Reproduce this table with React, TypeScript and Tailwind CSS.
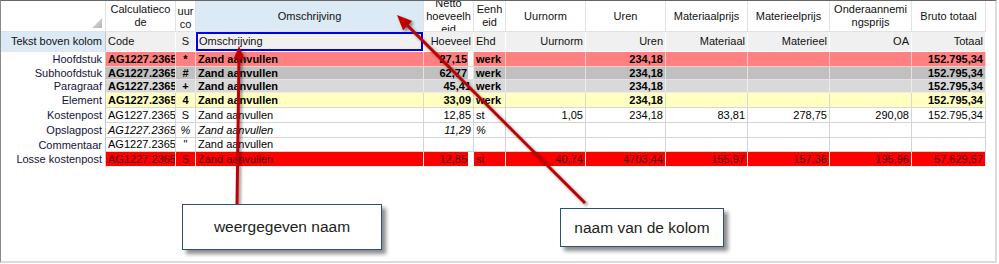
import clsx from "clsx";

type DataRow = {
  label: string;
  bg: string;
  line: string;
  font?: string;
  text?: string;
  gap?: boolean;
  cells: string[];
};

const COLS =
  "grid-cols-[105px_70px_20px_228px_50px_32px_80px_80px_82px_82px_82px_74px]";
const ROWS = "grid-rows-[31px_20px_15px_13px_13px_15px_15px_15px_14px_15px]";

// alignment per data column (code .. totaal)
const ALIGN = [
  "justify-start",
  "justify-center",
  "justify-start",
  "justify-end",
  "justify-start",
  "justify-end",
  "justify-end",
  "justify-end",
  "justify-end",
  "justify-end",
  "justify-end",
];

const headTop = [
  { lines: ["Calculatieco", "de"] },
  { lines: ["uur", "co"], cls: "pt-[3px]" },
  { lines: ["Omschrijving"], cls: "bg-[#dbeaf5]" },
  { lines: ["Netto", "hoeveelh", "eid"] },
  { lines: ["Eenh", "eid"] },
  { lines: ["Uurnorm"] },
  { lines: ["Uren"] },
  { lines: ["Materiaalprijs"] },
  { lines: ["Materieelprijs"] },
  { lines: ["Onderaannemi", "ngsprijs"] },
  { lines: ["Bruto totaal"] },
];

const headSub = [
  "Code",
  "S",
  "Omschrijving",
  "Hoeveel",
  "Ehd",
  "Uurnorm",
  "Uren",
  "Materiaal",
  "Materieel",
  "OA",
  "Totaal",
];

const code = "AG1227.2365";
const oms = "Zand aanvullen";

const rows: DataRow[] = [
  {
    label: "Hoofdstuk",
    bg: "bg-[#ff8080]",
    line: "border-[#f3d0d0]",
    font: "font-bold",
    gap: true,
    cells: [code, "*", oms, "27,15", "werk", "", "234,18", "", "", "", "152.795,34"],
  },
  {
    label: "Subhoofdstuk",
    bg: "bg-[#c0c0c0]",
    line: "border-[#e4e4e4]",
    font: "font-bold",
    gap: true,
    cells: [code, "#", oms, "62,77", "werk", "", "234,18", "", "", "", "152.795,34"],
  },
  {
    label: "Paragraaf",
    bg: "bg-[#d9d9d9]",
    line: "border-[#ececec]",
    font: "font-bold",
    cells: [code, "+", oms, "45,41", "werk", "", "234,18", "", "", "", "152.795,34"],
  },
  {
    label: "Element",
    bg: "bg-[#ffffc0]",
    line: "border-[#d8d8d8]",
    font: "font-bold",
    cells: [code, "4", oms, "33,09", "werk", "", "234,18", "", "", "", "152.795,34"],
  },
  {
    label: "Kostenpost",
    bg: "bg-white",
    line: "border-[#d4d4d4]",
    cells: [code, "S", oms, "12,85", "st", "1,05", "234,18", "83,81", "278,75", "290,08", "152.795,34"],
  },
  {
    label: "Opslagpost",
    bg: "bg-white",
    line: "border-[#d4d4d4]",
    font: "italic",
    cells: [code, "%", oms, "11,29", "%", "", "", "", "", "", ""],
  },
  {
    label: "Commentaar",
    bg: "bg-white",
    line: "border-[#d4d4d4]",
    cells: [code, '"', oms, "", "", "", "", "", "", "", ""],
  },
  {
    label: "Losse kostenpost",
    bg: "bg-[#ff0000]",
    line: "border-[#f0f0f0]",
    text: "text-[#4a0000]",
    gap: true,
    cells: [code, "S", oms, "12,85", "st", "40,74", "4703,44", "155,97", "157,36", "195,96", "57.629,57"],
  },
];

function Callout({ text, className }: { text: string; className: string }) {
  return (
    <div
      className={clsx(
        "absolute flex items-center justify-center border border-[#2a4f80] bg-white text-[15.5px] text-[#222] shadow-[4px_4px_4px_rgba(0,0,0,0.45)]",
        className
      )}
    >
      {text}
    </div>
  );
}

export default function App() {
  return (
    <div className="relative h-[264px] w-[999px] overflow-hidden bg-white font-['Liberation_Sans',Arial,sans-serif] text-[11px] text-black">
      <div className="h-[263px] w-[997px] border-b-2 border-l border-r-2 border-t border-b-[#dcdcdc] border-l-[#8a8a8a] border-r-[#dcdcdc] border-t-[#666]">
        <div className={clsx("grid w-[985px]", COLS, ROWS)}>
          {/* corner */}
          <div className="flex items-end justify-end border-b border-r border-[#e2e2e2] pb-[3px] pr-[3px]">
            <svg width="10" height="10" viewBox="0 0 10 10">
              <defs>
                <linearGradient id="tri" x1="0" y1="0" x2="1" y2="1">
                  <stop offset="0" stopColor="#e4e4e4" />
                  <stop offset="1" stopColor="#b4b4b4" />
                </linearGradient>
              </defs>
              <polygon points="0,10 10,10 10,0" fill="url(#tri)" />
            </svg>
          </div>
          {headTop.map((h, i) => (
            <div
              key={"t" + i}
              className={clsx(
                "flex flex-col items-center justify-center overflow-hidden border-b border-r border-[#e2e2e2] text-center leading-[13px] text-[#111]",
                h.cls
              )}
            >
              {h.lines.map((l) => (
                <span key={l} className="whitespace-nowrap">
                  {l}
                </span>
              ))}
            </div>
          ))}

          {/* second header row */}
          <div className="flex items-center justify-end overflow-hidden whitespace-nowrap border-b border-r border-b-[#e8e8e8] border-r-[#c8c8c8] bg-[#dbeaf5] pr-[3px] text-[#111]">
            Tekst boven kolom
          </div>
          {headSub.map((t, i) => (
            <div
              key={"s" + i}
              className={clsx(
                "flex items-center overflow-hidden whitespace-nowrap border-b border-r border-white bg-[#f0f0f0] px-[2px] text-[#111]",
                ALIGN[i],
                i === 2 && "pl-[3px] shadow-[inset_0_0_0_2px_#0000ee]"
              )}
            >
              {t}
            </div>
          ))}

          {/* data rows */}
          {rows.map((r) => (
            <Row key={r.label} row={r} />
          ))}
        </div>
      </div>

      {/* annotation arrows */}
      <svg
        className="pointer-events-none absolute left-0 top-0 drop-shadow-[2px_2px_1.5px_rgba(0,0,0,0.45)]"
        width="999"
        height="264"
      >
        <line x1="237" y1="204" x2="239" y2="56" stroke="#c00000" strokeWidth="3" />
        <polygon points="239,46 233.5,59 244.5,59" fill="#c00000" />
        <line x1="585" y1="203" x2="406" y2="24" stroke="#c00000" strokeWidth="3" />
        <polygon points="397,15 412.2,21 403,30.2" fill="#c00000" />
      </svg>

      <Callout text="weergegeven naam" className="left-[182px] top-[204px] h-[46px] w-[200px]" />
      <Callout text="naam van de kolom" className="left-[560px] top-[208px] h-[39px] w-[164px]" />
    </div>
  );
}

function Row({ row }: { row: DataRow }) {
  return (
    <>
      <div className="flex items-center justify-end overflow-hidden whitespace-nowrap border-r border-[#c8c8c8] bg-white pr-[3px] text-[#14143a]">
        {row.label}
      </div>
      {row.cells.map((c, i) =>
        i === 3 && row.gap ? (
          <div key={i} className={clsx("flex border-b border-r bg-white", row.line)}>
            <div
              className={clsx(
                "flex h-full w-[44px] items-center justify-end overflow-hidden whitespace-nowrap pr-[1px]",
                row.bg,
                row.font,
                row.text
              )}
            >
              {c}
            </div>
          </div>
        ) : (
          <div
            key={i}
            className={clsx(
              "flex items-center overflow-hidden whitespace-nowrap border-b border-r px-[2px]",
              ALIGN[i],
              row.bg,
              row.line,
              row.font,
              row.text
            )}
          >
            {c}
          </div>
        )
      )}
    </>
  );
}
